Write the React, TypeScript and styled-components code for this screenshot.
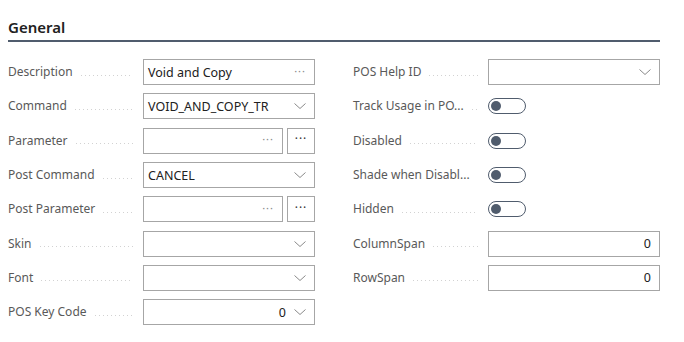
import React from "react"
import styled, { createGlobalStyle } from "styled-components"

const GlobalStyle = createGlobalStyle`
  html, body {
    margin: 0;
    padding: 0;
    background: #fff;
  }
  body {
    font-family: "Noto Sans", "Open Sans", "Liberation Sans", sans-serif;
    color: #212121;
  }
`

const Page = styled.div`
  width: 684px;
  height: 342px;
  padding: 17px 24px 0 8px;
  box-sizing: border-box;
`

const Heading = styled.h2`
  margin: 0;
  font-size: 15px;
  font-weight: 600;
  line-height: 20px;
  color: #212121;
  padding-bottom: 3px;
  border-bottom: 2px solid #505c6d;
`

const Columns = styled.div`
  display: grid;
  grid-template-columns: 307px 307px;
  column-gap: 38px;
  padding-top: 13px;
`

const Column = styled.div`
  display: flex;
  flex-direction: column;
`

const Row = styled.div`
  display: grid;
  grid-template-columns: 135px 1fr;
  align-items: center;
  height: 34.3px;
`

const Label = styled.div`
  display: flex;
  align-items: center;
  font-size: 12px;
  color: #595959;
  white-space: nowrap;
  padding-right: 10px;
  line-height: 16px;
`

const Leader = styled.span`
  flex: 1;
  height: 1px;
  margin: 6px 0 0 8px;
  align-self: center;
  background-image: linear-gradient(to right, #d2d2d2 1px, transparent 1px);
  background-size: 4px 1px;
  background-repeat: repeat-x;
`

const Control = styled.div`
  display: flex;
  gap: 4px;
  align-items: center;
`

const Box = styled.div`
  flex: 1;
  height: 26px;
  box-sizing: border-box;
  border: 1px solid #a6a6a6;
  display: flex;
  align-items: center;
  padding: 0 8px 0 4px;
  font-size: 12.5px;
  color: #212121;
`

const Value = styled.span<{ $right?: boolean }>`
  flex: 1;
  text-align: ${(p) => (p.$right ? "right" : "left")};
  white-space: nowrap;
`

const Dots = styled.span`
  color: #8a8a8a;
  font-size: 11px;
  letter-spacing: 1px;
  margin-left: 6px;
  line-height: 1;
  padding-bottom: 4px;
`

const Chevron = styled.svg`
  width: 12px;
  height: 8px;
  margin-left: 8px;
  flex: none;
`

const AssistButton = styled.div`
  width: 28px;
  height: 26px;
  box-sizing: border-box;
  border: 1px solid #a6a6a6;
  display: flex;
  align-items: center;
  justify-content: center;
  color: #333;
  font-size: 12px;
  letter-spacing: 1px;
  padding-bottom: 4px;
`

const Toggle = styled.div`
  width: 38px;
  height: 16px;
  box-sizing: border-box;
  border: 1px solid #505c6d;
  border-radius: 8px;
  position: relative;
  &::after {
    content: "";
    position: absolute;
    left: 2px;
    top: 2px;
    width: 10px;
    height: 10px;
    border-radius: 50%;
    background: #505c6d;
  }
`

const ChevronIcon = () => (
  <Chevron viewBox="0 0 12 8">
    <path d="M0.5 1.5 L6 6.5 L11.5 1.5" fill="none" stroke="#8a8a8a" strokeWidth="1" />
  </Chevron>
)

type Field =
  | { label: string; kind: "text"; value?: string; assist?: boolean }
  | { label: string; kind: "select"; value?: string; right?: boolean }
  | { label: string; kind: "number"; value: string }
  | { label: string; kind: "toggle" }

const left: Field[] = [
  { label: "Description", kind: "text", value: "Void and Copy" },
  { label: "Command", kind: "select", value: "VOID_AND_COPY_TR" },
  { label: "Parameter", kind: "text", assist: true },
  { label: "Post Command", kind: "select", value: "CANCEL" },
  { label: "Post Parameter", kind: "text", assist: true },
  { label: "Skin", kind: "select" },
  { label: "Font", kind: "select" },
  { label: "POS Key Code", kind: "select", value: "0", right: true },
]

const right: Field[] = [
  { label: "POS Help ID", kind: "select" },
  { label: "Track Usage in PO...", kind: "toggle" },
  { label: "Disabled", kind: "toggle" },
  { label: "Shade when Disabl...", kind: "toggle" },
  { label: "Hidden", kind: "toggle" },
  { label: "ColumnSpan", kind: "number", value: "0" },
  { label: "RowSpan", kind: "number", value: "0" },
]

const renderControl = (f: Field) => {
  switch (f.kind) {
    case "text":
      return (
        <Control>
          <Box>
            <Value>{f.value}</Value>
            <Dots>···</Dots>
          </Box>
          {f.assist && <AssistButton>···</AssistButton>}
        </Control>
      )
    case "select":
      return (
        <Control>
          <Box>
            <Value $right={f.right}>{f.value}</Value>
            <ChevronIcon />
          </Box>
        </Control>
      )
    case "number":
      return (
        <Control>
          <Box>
            <Value $right>{f.value}</Value>
          </Box>
        </Control>
      )
    case "toggle":
      return (
        <Control>
          <Toggle />
        </Control>
      )
  }
}

const FieldRow = ({ field }: { field: Field }) => (
  <Row>
    <Label>
      {field.label}
      <Leader />
    </Label>
    {renderControl(field)}
  </Row>
)

export default function App() {
  return (
    <>
      <GlobalStyle />
      <Page>
        <Heading>General</Heading>
        <Columns>
          <Column>
            {left.map((f) => (
              <FieldRow key={f.label} field={f} />
            ))}
          </Column>
          <Column>
            {right.map((f) => (
              <FieldRow key={f.label} field={f} />
            ))}
          </Column>
        </Columns>
      </Page>
    </>
  )
}
